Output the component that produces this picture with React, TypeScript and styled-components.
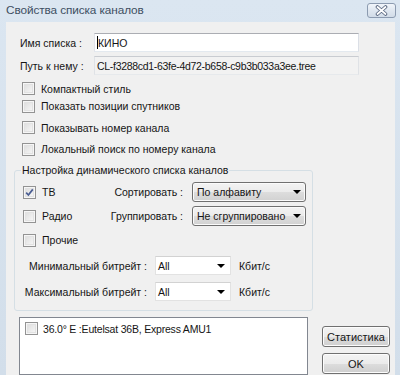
import React from "react";
import styled, { createGlobalStyle } from "styled-components";

const GlobalStyle = createGlobalStyle`
  html, body { margin: 0; padding: 0; }
  body {
    font-family: "Liberation Sans", Arial, sans-serif;
    font-size: 10.5px;
    color: #151515;
  }
`;

const Window = styled.div`
  width: 400px;
  height: 375px;
  overflow: hidden;
  display: flex;
  flex-direction: column;
  background: linear-gradient(180deg, #dbe6f1 0%, #d2deea 100%);
  box-sizing: border-box;
`;

const TitleBar = styled.div`
  height: 22px;
  flex: none;
  display: flex;
  justify-content: space-between;
  align-items: flex-start;
  padding: 0 4px 0 6px;
`;

const TitleText = styled.div`
  font-size: 11.8px;
  letter-spacing: -0.1px;
  line-height: 21px;
  color: #3e4f62;
`;

const CloseButton = styled.div`
  margin-top: 3px;
  width: 29px;
  height: 15px;
  box-sizing: border-box;
  border: 1px solid #8c9bb0;
  border-radius: 3px;
  background: linear-gradient(180deg, #f1f5fa 0%, #dfe7f0 50%, #d2dce8 100%);
  display: flex;
  align-items: center;
  justify-content: center;
`;

const Body = styled.div`
  flex: 1;
  min-height: 0;
  margin: 0 5px 0 6px;
  background: #f0f0f0;
  padding: 11px 0 0 8px;
  display: flex;
  flex-direction: column;
  overflow: hidden;
`;

const FieldRow = styled.div<{ $mt?: number }>`
  display: flex;
  align-items: center;
  height: 19px;
  margin-left: 6px;
  margin-top: ${(p) => p.$mt ?? 0}px;
`;

const FieldLabel = styled.div`
  width: 74px;
  flex: none;
`;

const TextBox = styled.div<{ $readonly?: boolean }>`
  width: 265px;
  height: 19px;
  box-sizing: border-box;
  border: 1px solid;
  border-color: ${(p) =>
    p.$readonly ? "#c9ccd1 #dfe2e6 #e6e9ec #dfe2e6" : "#abadb3 #dbdfe6 #e3e9ef #e2e3ea"};
  background: ${(p) => (p.$readonly ? "#f2f2f2" : "#ffffff")};
  padding: 0 2px;
  display: flex;
  align-items: center;
  white-space: nowrap;
  overflow: hidden;
  letter-spacing: ${(p) => (p.$readonly ? "-0.3px" : "0")};
`;

const Caret = styled.span`
  display: inline-block;
  width: 1px;
  height: 13px;
  background: #000;
`;

const CheckRow = styled.div<{ $mt?: number }>`
  display: flex;
  align-items: center;
  gap: 6px;
  height: 18px;
  margin-left: 8px;
  margin-top: ${(p) => p.$mt ?? 0}px;
  white-space: nowrap;
`;

const Box = styled.span`
  flex: none;
  width: 13px;
  height: 13px;
  box-sizing: border-box;
  border: 1px solid #939393;
  background: #ffffff;
  display: inline-flex;
  align-items: center;
  justify-content: center;
  box-shadow: inset 0 0 0 1px #f6f6f6, inset 0 0 0 2px #e2e2e2;
  background-image: linear-gradient(135deg, #dadada 0%, #f4f4f4 80%, #ffffff 100%);
`;

const Group = styled.fieldset`
  margin: 6px 0 0 0;
  width: 299px;
  box-sizing: border-box;
  border: 1px solid #d5dfe5;
  border-radius: 3px;
  padding: 0 6px 9px 8px;
  min-width: 0;
`;

const Legend = styled.legend`
  padding: 0 1px;
  margin-left: -2px;
  font-size: 10.5px;
  line-height: 13px;
`;

const OptGrid = styled.div`
  margin-top: 5px;
  display: grid;
  grid-template-columns: 1fr auto 114px;
  grid-template-rows: 20px 20px 20px;
  column-gap: 9px;
  row-gap: 4px;
  align-items: center;
`;

const CheckCell = styled.div`
  display: flex;
  align-items: center;
  gap: 6px;
  white-space: nowrap;
  grid-column: 1;
`;

const RightLabel = styled.div`
  text-align: right;
  white-space: nowrap;
`;

const ButtonSelect = styled.div`
  height: 20px;
  box-sizing: border-box;
  border: 1px solid #707070;
  border-radius: 3px;
  background: linear-gradient(180deg, #f3f3f3 0%, #ebebeb 50%, #dddddd 51%, #d1d1d1 100%);
  box-shadow: inset 0 0 0 1px #fbfbfb;
  display: flex;
  align-items: center;
  justify-content: space-between;
  padding: 0 4px 0 4px;
  white-space: nowrap;
`;

const BitGrid = styled.div`
  margin-top: 6px;
  display: grid;
  grid-template-columns: 124px 76px auto;
  grid-template-rows: 19px 19px;
  column-gap: 8px;
  row-gap: 7px;
  align-items: center;
`;

const FlatSelect = styled.div`
  height: 19px;
  box-sizing: border-box;
  border: 1px solid #e2e2e2;
  border-top-color: #d2d2d2;
  background: #ffffff;
  display: flex;
  align-items: center;
  justify-content: space-between;
  padding: 0 5px 0 2px;
`;

const BottomRow = styled.div`
  display: flex;
  align-items: flex-end;
`;

const LeftCol = styled.div`
  display: flex;
  flex-direction: column;
  width: 299px;
  flex: none;
`;

const ListBox = styled.div`
  margin: 6px 5px 0 5px;
  height: 58px;
  box-sizing: border-box;
  border: 1px solid #828790;
  background: #ffffff;
  padding: 4px 5px;
`;

const ListItem = styled.div`
  display: flex;
  align-items: center;
  gap: 5px;
  height: 13px;
  white-space: nowrap;
  letter-spacing: -0.2px;
`;

const RightCol = styled.div`
  margin-left: 9px;
  display: flex;
  flex-direction: column;
  gap: 6px;
  padding-bottom: 1px;
`;

const PushButton = styled.div`
  width: 68px;
  height: 21px;
  box-sizing: border-box;
  border: 1px solid #707070;
  border-radius: 3px;
  background: linear-gradient(180deg, #f3f3f3 0%, #ebebeb 50%, #dddddd 51%, #cfcfcf 100%);
  box-shadow: inset 0 0 0 1px #fcfcfc;
  display: flex;
  align-items: center;
  justify-content: center;
  font-size: 11px;
`;

const Arrow = () => (
  <svg width="8" height="4" viewBox="0 0 8 4">
    <polygon points="0,0 8,0 4,4" fill="#000" />
  </svg>
);

const CheckMark = () => (
  <svg width="9" height="9" viewBox="0 0 9 9">
    <path d="M1.2 4.6 L3.4 7 L7.8 1.4" stroke="#4a5d92" strokeWidth="1.7" fill="none" />
  </svg>
);

const Check = ({ checked }: { checked?: boolean }) => <Box>{checked && <CheckMark />}</Box>;

const CloseIcon = () => (
  <svg width="13" height="11" viewBox="0 0 13 11">
    <path d="M2.5 2 L10.5 9 M10.5 2 L2.5 9" stroke="#5a6880" strokeWidth="3.6" strokeLinecap="round" />
    <path d="M2.5 2 L10.5 9 M10.5 2 L2.5 9" stroke="#ffffff" strokeWidth="1.8" strokeLinecap="round" />
  </svg>
);

export default function App() {
  return (
    <>
      <GlobalStyle />
      <Window>
        <TitleBar>
          <TitleText>Свойства списка каналов</TitleText>
          <CloseButton>
            <CloseIcon />
          </CloseButton>
        </TitleBar>
        <Body>
          <FieldRow>
            <FieldLabel>Имя списка :</FieldLabel>
            <TextBox>
              <Caret />
              КИНО
            </TextBox>
          </FieldRow>
          <FieldRow $mt={4}>
            <FieldLabel>Путь к нему :</FieldLabel>
            <TextBox $readonly>CL-f3288cd1-63fe-4d72-b658-c9b3b033a3ee.tree</TextBox>
          </FieldRow>

          <CheckRow $mt={5}>
            <Check />
            Компактный стиль
          </CheckRow>
          <CheckRow>
            <Check />
            Показать позиции спутников
          </CheckRow>
          <CheckRow $mt={4}>
            <Check />
            Показывать номер канала
          </CheckRow>
          <CheckRow $mt={4}>
            <Check />
            Локальный поиск по номеру канала
          </CheckRow>

          <BottomRow>
            <LeftCol>
              <Group>
                <Legend>Настройка динамического списка каналов</Legend>
                <OptGrid>
                  <CheckCell>
                    <Check checked />
                    ТВ
                  </CheckCell>
                  <RightLabel>Сортировать :</RightLabel>
                  <ButtonSelect>
                    По алфавиту
                    <Arrow />
                  </ButtonSelect>
                  <CheckCell>
                    <Check />
                    Радио
                  </CheckCell>
                  <RightLabel>Группировать :</RightLabel>
                  <ButtonSelect>
                    Не сгруппировано
                    <Arrow />
                  </ButtonSelect>
                  <CheckCell>
                    <Check />
                    Прочие
                  </CheckCell>
                </OptGrid>
                <BitGrid>
                  <RightLabel>Минимальный битрейт :</RightLabel>
                  <FlatSelect>
                    All
                    <Arrow />
                  </FlatSelect>
                  <div>Кбит/с</div>
                  <RightLabel>Максимальный битрейт :</RightLabel>
                  <FlatSelect>
                    All
                    <Arrow />
                  </FlatSelect>
                  <div>Кбит/с</div>
                </BitGrid>
              </Group>
              <ListBox>
                <ListItem>
                  <Check />
                  36.0° E :Eutelsat 36B, Express AMU1
                </ListItem>
              </ListBox>
            </LeftCol>
            <RightCol>
              <PushButton>Статистика</PushButton>
              <PushButton>OK</PushButton>
            </RightCol>
          </BottomRow>
        </Body>
      </Window>
    </>
  );
}
